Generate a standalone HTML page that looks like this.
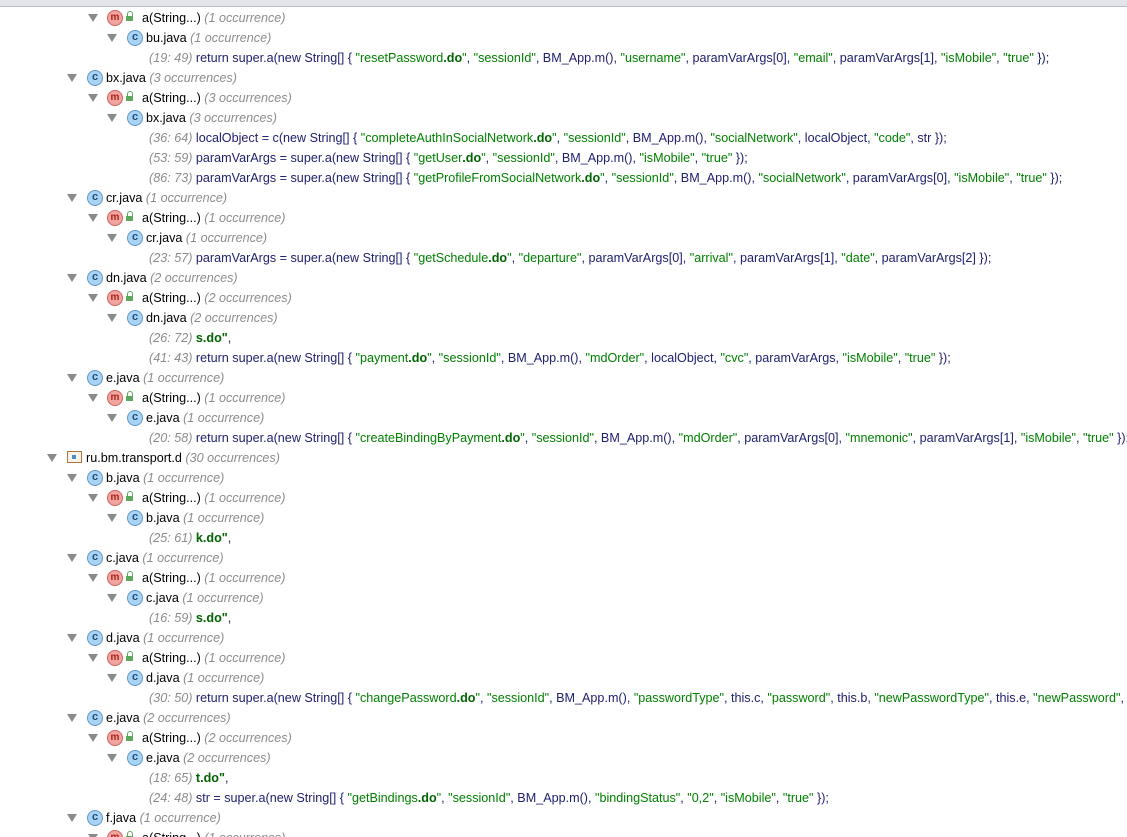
<!DOCTYPE html>
<html><head><meta charset="utf-8"><style>
html,body{overflow:hidden}
body{margin:0;width:1127px;height:837px;background:#fff;overflow:hidden;position:relative;font-family:"Liberation Sans",sans-serif;font-size:12.6px;color:#000}
.top{position:absolute;left:0;top:0;width:1127px;height:6px;background:#e3e5ea;border-bottom:1px solid #b9bcc4}
.r{position:absolute;height:20px;line-height:20px;white-space:nowrap}
.a{position:absolute;width:0;height:0;border-left:5px solid transparent;border-right:5px solid transparent;border-top:8px solid #8a8a8a}
.o{color:#8c8c8c;font-style:italic}
.c{position:absolute;width:14px;height:14px;border-radius:50%;background:#a9d3f3;border:1px solid #5f99cf;font-size:11px;line-height:13px;text-align:center;color:#1d4d7a;font-weight:bold}
.m{position:absolute;width:14px;height:14px;border-radius:50%;background:#f1a5a0;border:1px solid #d0625c;font-size:10px;line-height:13px;text-align:center;color:#a8231c;font-weight:bold}
.l{position:absolute;width:7px;height:5px;background:#5ea85e;}
.l:before{content:"";position:absolute;left:1px;top:-5px;width:4px;height:4px;border:1px solid #5ea85e;border-bottom:none;border-radius:3px 3px 0 0}
.p{position:absolute;width:13px;height:10px;border:1px solid #a7753e;background:#fbf3e6}
.p:after{content:"";position:absolute;left:4px;top:3px;width:4px;height:4px;background:#4c8fd0}
.k{color:#202070}
.s{color:#008000}
.s b{color:#006400}
.n{color:#8c8c8c;font-style:italic}
.w{position:absolute;left:0;top:0;width:1127px;height:837px;overflow:hidden}
</style></head><body><div class="w">
<div class="top"></div>

<div class="a" style="left:88px;top:14px"></div><div class="m" style="left:107px;top:10px">m</div><div class="l" style="left:126px;top:16px"></div><div class="r" style="left:142px;top:8px">a(String...) <span class="o">(1 occurrence)</span></div>
<div class="a" style="left:107px;top:34px"></div><div class="c" style="left:127px;top:30px">c</div><div class="r" style="left:146px;top:28px">bu.java <span class="o">(1 occurrence)</span></div>
<div class="r k" style="left:149px;top:48px"><span class="n">(19: 49)</span> return super.a(new String[] { <span class="s">"resetPassword<b>.do</b>"</span>, <span class="s">"sessionId"</span>, BM_App.m(), <span class="s">"username"</span>, paramVarArgs[0], <span class="s">"email"</span>, paramVarArgs[1], <span class="s">"isMobile"</span>, <span class="s">"true"</span> });</div>

<div class="a" style="left:67px;top:74px"></div><div class="c" style="left:87px;top:70px">c</div><div class="r" style="left:106px;top:68px">bx.java <span class="o">(3 occurrences)</span></div>
<div class="a" style="left:88px;top:94px"></div><div class="m" style="left:107px;top:90px">m</div><div class="l" style="left:126px;top:96px"></div><div class="r" style="left:142px;top:88px">a(String...) <span class="o">(3 occurrences)</span></div>
<div class="a" style="left:107px;top:114px"></div><div class="c" style="left:127px;top:110px">c</div><div class="r" style="left:146px;top:108px">bx.java <span class="o">(3 occurrences)</span></div>
<div class="r k" style="left:149px;top:128px"><span class="n">(36: 64)</span> localObject = c(new String[] { <span class="s">"completeAuthInSocialNetwork<b>.do</b>"</span>, <span class="s">"sessionId"</span>, BM_App.m(), <span class="s">"socialNetwork"</span>, localObject, <span class="s">"code"</span>, str });</div>
<div class="r k" style="left:149px;top:148px"><span class="n">(53: 59)</span> paramVarArgs = super.a(new String[] { <span class="s">"getUser<b>.do</b>"</span>, <span class="s">"sessionId"</span>, BM_App.m(), <span class="s">"isMobile"</span>, <span class="s">"true"</span> });</div>
<div class="r k" style="left:149px;top:168px"><span class="n">(86: 73)</span> paramVarArgs = super.a(new String[] { <span class="s">"getProfileFromSocialNetwork<b>.do</b>"</span>, <span class="s">"sessionId"</span>, BM_App.m(), <span class="s">"socialNetwork"</span>, paramVarArgs[0], <span class="s">"isMobile"</span>, <span class="s">"true"</span> });</div>

<div class="a" style="left:67px;top:194px"></div><div class="c" style="left:87px;top:190px">c</div><div class="r" style="left:106px;top:188px">cr.java <span class="o">(1 occurrence)</span></div>
<div class="a" style="left:88px;top:214px"></div><div class="m" style="left:107px;top:210px">m</div><div class="l" style="left:126px;top:216px"></div><div class="r" style="left:142px;top:208px">a(String...) <span class="o">(1 occurrence)</span></div>
<div class="a" style="left:107px;top:234px"></div><div class="c" style="left:127px;top:230px">c</div><div class="r" style="left:146px;top:228px">cr.java <span class="o">(1 occurrence)</span></div>
<div class="r k" style="left:149px;top:248px"><span class="n">(23: 57)</span> paramVarArgs = super.a(new String[] { <span class="s">"getSchedule<b>.do</b>"</span>, <span class="s">"departure"</span>, paramVarArgs[0], <span class="s">"arrival"</span>, paramVarArgs[1], <span class="s">"date"</span>, paramVarArgs[2] });</div>

<div class="a" style="left:67px;top:274px"></div><div class="c" style="left:87px;top:270px">c</div><div class="r" style="left:106px;top:268px">dn.java <span class="o">(2 occurrences)</span></div>
<div class="a" style="left:88px;top:294px"></div><div class="m" style="left:107px;top:290px">m</div><div class="l" style="left:126px;top:296px"></div><div class="r" style="left:142px;top:288px">a(String...) <span class="o">(2 occurrences)</span></div>
<div class="a" style="left:107px;top:314px"></div><div class="c" style="left:127px;top:310px">c</div><div class="r" style="left:146px;top:308px">dn.java <span class="o">(2 occurrences)</span></div>
<div class="r k" style="left:149px;top:328px"><span class="n">(26: 72)</span> <span class="s"><b>s.do"</b></span>,</div>
<div class="r k" style="left:149px;top:348px"><span class="n">(41: 43)</span> return super.a(new String[] { <span class="s">"payment<b>.do</b>"</span>, <span class="s">"sessionId"</span>, BM_App.m(), <span class="s">"mdOrder"</span>, localObject, <span class="s">"cvc"</span>, paramVarArgs, <span class="s">"isMobile"</span>, <span class="s">"true"</span> });</div>

<div class="a" style="left:67px;top:374px"></div><div class="c" style="left:87px;top:370px">c</div><div class="r" style="left:106px;top:368px">e.java <span class="o">(1 occurrence)</span></div>
<div class="a" style="left:88px;top:394px"></div><div class="m" style="left:107px;top:390px">m</div><div class="l" style="left:126px;top:396px"></div><div class="r" style="left:142px;top:388px">a(String...) <span class="o">(1 occurrence)</span></div>
<div class="a" style="left:107px;top:414px"></div><div class="c" style="left:127px;top:410px">c</div><div class="r" style="left:146px;top:408px">e.java <span class="o">(1 occurrence)</span></div>
<div class="r k" style="left:149px;top:428px"><span class="n">(20: 58)</span> return super.a(new String[] { <span class="s">"createBindingByPayment<b>.do</b>"</span>, <span class="s">"sessionId"</span>, BM_App.m(), <span class="s">"mdOrder"</span>, paramVarArgs[0], <span class="s">"mnemonic"</span>, paramVarArgs[1], <span class="s">"isMobile"</span>, <span class="s">"true"</span> });</div>

<div class="a" style="left:47px;top:454px"></div><div class="p" style="left:67px;top:451px"></div><div class="r" style="left:86px;top:448px">ru.bm.transport.d <span class="o">(30 occurrences)</span></div>

<div class="a" style="left:67px;top:474px"></div><div class="c" style="left:87px;top:470px">c</div><div class="r" style="left:106px;top:468px">b.java <span class="o">(1 occurrence)</span></div>
<div class="a" style="left:88px;top:494px"></div><div class="m" style="left:107px;top:490px">m</div><div class="l" style="left:126px;top:496px"></div><div class="r" style="left:142px;top:488px">a(String...) <span class="o">(1 occurrence)</span></div>
<div class="a" style="left:107px;top:514px"></div><div class="c" style="left:127px;top:510px">c</div><div class="r" style="left:146px;top:508px">b.java <span class="o">(1 occurrence)</span></div>
<div class="r k" style="left:149px;top:528px"><span class="n">(25: 61)</span> <span class="s"><b>k.do"</b></span>,</div>

<div class="a" style="left:67px;top:554px"></div><div class="c" style="left:87px;top:550px">c</div><div class="r" style="left:106px;top:548px">c.java <span class="o">(1 occurrence)</span></div>
<div class="a" style="left:88px;top:574px"></div><div class="m" style="left:107px;top:570px">m</div><div class="l" style="left:126px;top:576px"></div><div class="r" style="left:142px;top:568px">a(String...) <span class="o">(1 occurrence)</span></div>
<div class="a" style="left:107px;top:594px"></div><div class="c" style="left:127px;top:590px">c</div><div class="r" style="left:146px;top:588px">c.java <span class="o">(1 occurrence)</span></div>
<div class="r k" style="left:149px;top:608px"><span class="n">(16: 59)</span> <span class="s"><b>s.do"</b></span>,</div>

<div class="a" style="left:67px;top:634px"></div><div class="c" style="left:87px;top:630px">c</div><div class="r" style="left:106px;top:628px">d.java <span class="o">(1 occurrence)</span></div>
<div class="a" style="left:88px;top:654px"></div><div class="m" style="left:107px;top:650px">m</div><div class="l" style="left:126px;top:656px"></div><div class="r" style="left:142px;top:648px">a(String...) <span class="o">(1 occurrence)</span></div>
<div class="a" style="left:107px;top:674px"></div><div class="c" style="left:127px;top:670px">c</div><div class="r" style="left:146px;top:668px">d.java <span class="o">(1 occurrence)</span></div>
<div class="r k" style="left:149px;top:688px;width:978px;overflow:hidden"><span class="n">(30: 50)</span> return super.a(new String[] { <span class="s">"changePassword<b>.do</b>"</span>, <span class="s">"sessionId"</span>, BM_App.m(), <span class="s">"passwordType"</span>, this.c, <span class="s">"password"</span>, this.b, <span class="s">"newPasswordType"</span>, this.e, <span class="s">"newPassword"</span>, this.d, <span class="s">"isMobile"</span>, <span class="s">"true"</span> });</div>

<div class="a" style="left:67px;top:714px"></div><div class="c" style="left:87px;top:710px">c</div><div class="r" style="left:106px;top:708px">e.java <span class="o">(2 occurrences)</span></div>
<div class="a" style="left:88px;top:734px"></div><div class="m" style="left:107px;top:730px">m</div><div class="l" style="left:126px;top:736px"></div><div class="r" style="left:142px;top:728px">a(String...) <span class="o">(2 occurrences)</span></div>
<div class="a" style="left:107px;top:754px"></div><div class="c" style="left:127px;top:750px">c</div><div class="r" style="left:146px;top:748px">e.java <span class="o">(2 occurrences)</span></div>
<div class="r k" style="left:149px;top:768px"><span class="n">(18: 65)</span> <span class="s"><b>t.do"</b></span>,</div>
<div class="r k" style="left:149px;top:788px"><span class="n">(24: 48)</span> str = super.a(new String[] { <span class="s">"getBindings<b>.do</b>"</span>, <span class="s">"sessionId"</span>, BM_App.m(), <span class="s">"bindingStatus"</span>, <span class="s">"0,2"</span>, <span class="s">"isMobile"</span>, <span class="s">"true"</span> });</div>

<div class="a" style="left:67px;top:814px"></div><div class="c" style="left:87px;top:810px">c</div><div class="r" style="left:106px;top:808px">f.java <span class="o">(1 occurrence)</span></div>
<div class="a" style="left:88px;top:834px"></div><div class="m" style="left:107px;top:830px">m</div><div class="l" style="left:126px;top:836px"></div><div class="r" style="left:142px;top:828px">a(String...) <span class="o">(1 occurrence)</span></div>
</div></body></html>
